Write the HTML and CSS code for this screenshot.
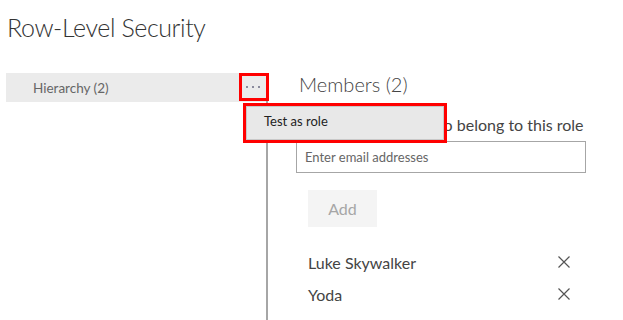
FILE: index.html
```html
<!DOCTYPE html>
<html lang="en">
<head>
  <meta charset="UTF-8">
  <title>Row-Level Security</title>
  <link rel="stylesheet" href="styles.css">
</head>
<body>
  <div class="page">
    <h1 class="title">Row-Level Security</h1>

    <div class="layout">
      <div class="sidebar">
        <div class="role-row">
          <span class="role-name">Hierarchy (2)</span>
          <div class="more-btn">
            <span class="dot"></span>
            <span class="dot"></span>
            <span class="dot"></span>
            <div class="menu">
              <div class="menu-item">Test as role</div>
            </div>
          </div>
        </div>
      </div>

      <div class="main">
        <h2 class="members-title">Members (2)</h2>
        <p class="hint">People or groups who belong to this role</p>
        <input class="email" type="text" placeholder="Enter email addresses">
        <button class="add-btn">Add</button>
        <ul class="member-list">
          <li class="member">
            <span>Luke Skywalker</span>
            <svg class="remove" width="12" height="12" viewBox="0 0 12 12"><path d="M0.5 0.5 L11.5 11.5 M11.5 0.5 L0.5 11.5" stroke="#555" stroke-width="1.2" fill="none"/></svg>
          </li>
          <li class="member">
            <span>Yoda</span>
            <svg class="remove" width="12" height="12" viewBox="0 0 12 12"><path d="M0.5 0.5 L11.5 11.5 M11.5 0.5 L0.5 11.5" stroke="#555" stroke-width="1.2" fill="none"/></svg>
          </li>
        </ul>
      </div>
    </div>
  </div>
</body>
</html>
```

FILE: styles.css
```css
* {
  margin: 0;
  padding: 0;
  box-sizing: border-box;
}
html, body {
  height: 100%;
  background: #fff;
  font-family: 'Lato', 'Noto Sans', sans-serif;
  color: #333;
  overflow: hidden;
}
.page {
  display: flex;
  flex-direction: column;
  height: 100%;
}
.title {
  font-size: 25px;
  font-weight: 300;
  letter-spacing: -0.4px;
  color: #333;
  line-height: 34px;
  padding: 10px 0 0 7px;
}
.layout {
  display: flex;
  flex-grow: 1;
  margin-top: 29px;
}
.sidebar {
  width: 262px;
  margin-left: 6px;
  border-right: 2px solid #a6a6a6;
}
.role-row {
  display: flex;
  align-items: center;
  height: 29px;
  background: #ebebeb;
  padding-left: 27px;
}
.role-name {
  font-size: 13.5px;
  color: #666;
}
.more-btn {
  position: relative;
  display: flex;
  align-items: center;
  justify-content: center;
  gap: 4px;
  width: 30px;
  height: 28px;
  margin-left: auto;
  margin-right: -3px;
  margin-top: -2px;
  border: 3px solid #f00;
  padding-right: 3px;
}
.dot {
  width: 2px;
  height: 2px;
  background: #8a8a9c;
}
.menu {
  position: absolute;
  top: 27px;
  left: 1px;
  width: 204px;
  height: 40px;
  border: 3px solid #f00;
  background: #e8e8e8;
  z-index: 10;
}
.menu-item {
  height: 100%;
  border: 1px solid #c8c8c8;
  padding: 0 0 0 17px;
  font-size: 13px;
  color: #222;
  line-height: 29px;
}
.main {
  display: flex;
  flex-direction: column;
  align-items: flex-start;
  padding-left: 28px;
}
.members-title {
  font-size: 20px;
  font-weight: 300;
  color: #444;
  line-height: 22px;
  padding-left: 3px;
}
.hint {
  font-size: 16px;
  color: #444;
  margin-top: 20px;
  padding-left: 4px;
  line-height: 20px;
}
.email {
  width: 290px;
  height: 32px;
  margin-top: 6px;
  border: 1px solid #a6a6a6;
  padding: 0 8px;
  font-family: inherit;
  font-size: 13px;
  outline: none;
}
.email::placeholder {
  color: #666;
}
.add-btn {
  width: 69px;
  height: 37px;
  margin: 17px 0 0 12px;
  border: none;
  background: #f4f4f4;
  color: #a6a6a6;
  font-family: inherit;
  font-size: 16px;
}
.member-list {
  list-style: none;
  width: 276px;
  margin: 19px 0 0 12px;
}
.member {
  display: flex;
  justify-content: space-between;
  align-items: center;
  height: 32px;
  font-size: 16px;
  color: #444;
}
.remove {
  margin-right: 14px;
}
```
